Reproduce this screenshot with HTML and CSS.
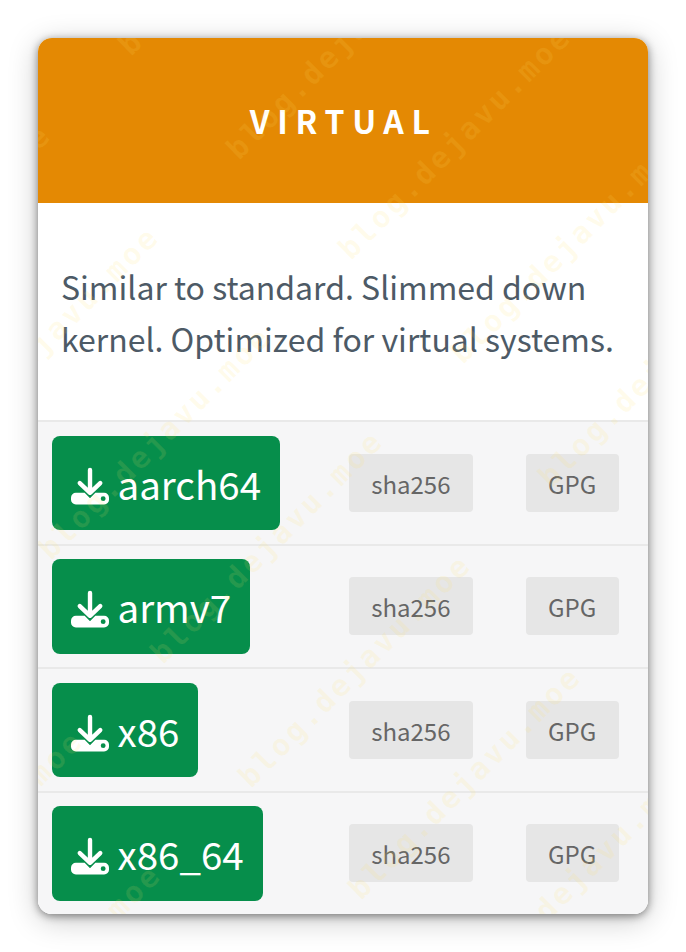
FILE: index.html
```html
<!DOCTYPE html>
<html lang="en">
<head>
<meta charset="utf-8">
<title>Virtual</title>
<link rel="stylesheet" href="styles.css">
</head>
<body>
<svg class="defs" width="0" height="0" aria-hidden="true">
  <symbol id="dl" viewBox="0 0 40 40">
    <path class="dl-arrow" d="M19.5 4.5V28M9 18L19.5 28L30 18"/>
    <path class="dl-tray" fill-rule="evenodd" d="M5 28H14L19.5 33.5L25 28H34A5 5 0 0 1 39 33V35A5 5 0 0 1 34 40H5A5 5 0 0 1 0 35V33A5 5 0 0 1 5 28ZM33 31.5A2.5 2.5 0 1 0 33 36.5A2.5 2.5 0 1 0 33 31.5Z"/>
  </symbol>
</svg>
<main class="card">
  <header class="card-head"><h2 class="card-title">VIRTUAL</h2></header>
  <section class="card-desc"><p class="card-text">Similar to standard. Slimmed down kernel. Optimized for virtual systems.</p></section>
  <ul class="rows">
    <li class="row">
      <a class="btn-dl" href="#"><svg class="dl-icon"><use href="#dl"/></svg>aarch64</a>
      <div class="links"><a class="btn-sm" href="#">sha256</a><a class="btn-sm" href="#">GPG</a></div>
    </li>
    <li class="row">
      <a class="btn-dl" href="#"><svg class="dl-icon"><use href="#dl"/></svg>armv7</a>
      <div class="links"><a class="btn-sm" href="#">sha256</a><a class="btn-sm" href="#">GPG</a></div>
    </li>
    <li class="row">
      <a class="btn-dl" href="#"><svg class="dl-icon"><use href="#dl"/></svg>x86</a>
      <div class="links"><a class="btn-sm" href="#">sha256</a><a class="btn-sm" href="#">GPG</a></div>
    </li>
    <li class="row">
      <a class="btn-dl" href="#"><svg class="dl-icon"><use href="#dl"/></svg>x86_64</a>
      <div class="links"><a class="btn-sm" href="#">sha256</a><a class="btn-sm" href="#">GPG</a></div>
    </li>
  </ul>
  <svg class="watermark" viewBox="38 38 610 876" aria-hidden="true">
    <text transform="translate(-169 359) rotate(-45)">blog.dejavu.moe</text>
    <text transform="translate(131 57) rotate(-45)">blog.dejavu.moe</text>
    <text transform="translate(-61 461) rotate(-45)">blog.dejavu.moe</text>
    <text transform="translate(239 161) rotate(-45)">blog.dejavu.moe</text>
    <text transform="translate(51 561) rotate(-45)">blog.dejavu.moe</text>
    <text transform="translate(351 261) rotate(-45)">blog.dejavu.moe</text>
    <text transform="translate(-137 965) rotate(-45)">blog.dejavu.moe</text>
    <text transform="translate(163 665) rotate(-45)">blog.dejavu.moe</text>
    <text transform="translate(463 365) rotate(-45)">blog.dejavu.moe</text>
    <text transform="translate(-59 1099) rotate(-45)">blog.dejavu.moe</text>
    <text transform="translate(251 789) rotate(-45)">blog.dejavu.moe</text>
    <text transform="translate(551 489) rotate(-45)">blog.dejavu.moe</text>
    <text transform="translate(361 901) rotate(-45)">blog.dejavu.moe</text>
    <text transform="translate(473 997) rotate(-45)">blog.dejavu.moe</text>
  </svg>
</main>
</body>
</html>
```
FILE: styles.css
```css
* { box-sizing: border-box; }
html, body { margin: 0; height: 100%; overflow: hidden; background: #fff; }
body {
  padding: 38px;
  font-family: "Noto Sans CJK SC", "Noto Sans", sans-serif;
}
.defs { position: absolute; }
.card {
  position: relative;
  width: 610px;
  height: 876px;
  border-radius: 14px;
  overflow: hidden;
  background: #fff;
}
body::before {
  content: "";
  position: absolute;
  left: 38px;
  top: 38px;
  width: 610px;
  height: 876px;
  border-radius: 14px;
  box-shadow: 0 2px 8px rgba(0, 0, 0, .45), 0 6px 30px rgba(0, 0, 0, .22);
}
.card-head {
  height: 165px;
  padding: 0 0 2px 1.5px;
  background: #e48903;
  display: flex;
  align-items: center;
  justify-content: center;
}
.card-title {
  margin: 0;
  color: #fff;
  font-size: 32px;
  line-height: 40px;
  font-weight: 700;
  letter-spacing: 7.7px;
}
.card-desc {
  height: 217px;
  padding: 57px 23px 0;
}
.card-text {
  margin: 0;
  color: #4d5a66;
  font-size: 32px;
  line-height: 52px;
}
.rows { margin: 0; padding: 0; list-style: none; }
.row {
  display: flex;
  align-items: center;
  justify-content: space-between;
  height: 123.5px;
  padding: 0 29px 0 14px;
  background: #f6f6f7;
  border-top: 2px solid #e9e9e9;
}
.btn-dl {
  display: flex;
  align-items: center;
  gap: 8px;
  height: 94.5px;
  padding: 0 19px 0 18.5px;
  border-radius: 8px;
  background: #068e4b;
  color: #fff;
  font-size: 38.5px;
  line-height: 50px;
  text-decoration: none;
}
.dl-icon { width: 39px; height: 40px; flex: none; margin-top: 4px; }
.dl-arrow { fill: none; stroke: #fff; stroke-width: 4.5; stroke-linecap: round; stroke-linejoin: round; }
.dl-tray { fill: #fff; }
.links { display: flex; gap: 53px; }
.btn-sm {
  display: flex;
  align-items: center;
  height: 58px;
  padding: 2px 22.75px 0 21.75px;
  border-radius: 4px;
  background: #e6e6e6;
  color: #666;
  font-size: 24px;
  line-height: 32px;
  text-decoration: none;
}
.watermark {
  position: absolute;
  inset: 0;
  width: 610px;
  height: 876px;
  pointer-events: none;
}
.watermark text {
  font-family: "DejaVu Sans Mono", monospace;
  font-size: 30px;
  font-weight: 700;
  letter-spacing: 2.9px;
  fill: rgba(255, 225, 100, .12);
}
```
